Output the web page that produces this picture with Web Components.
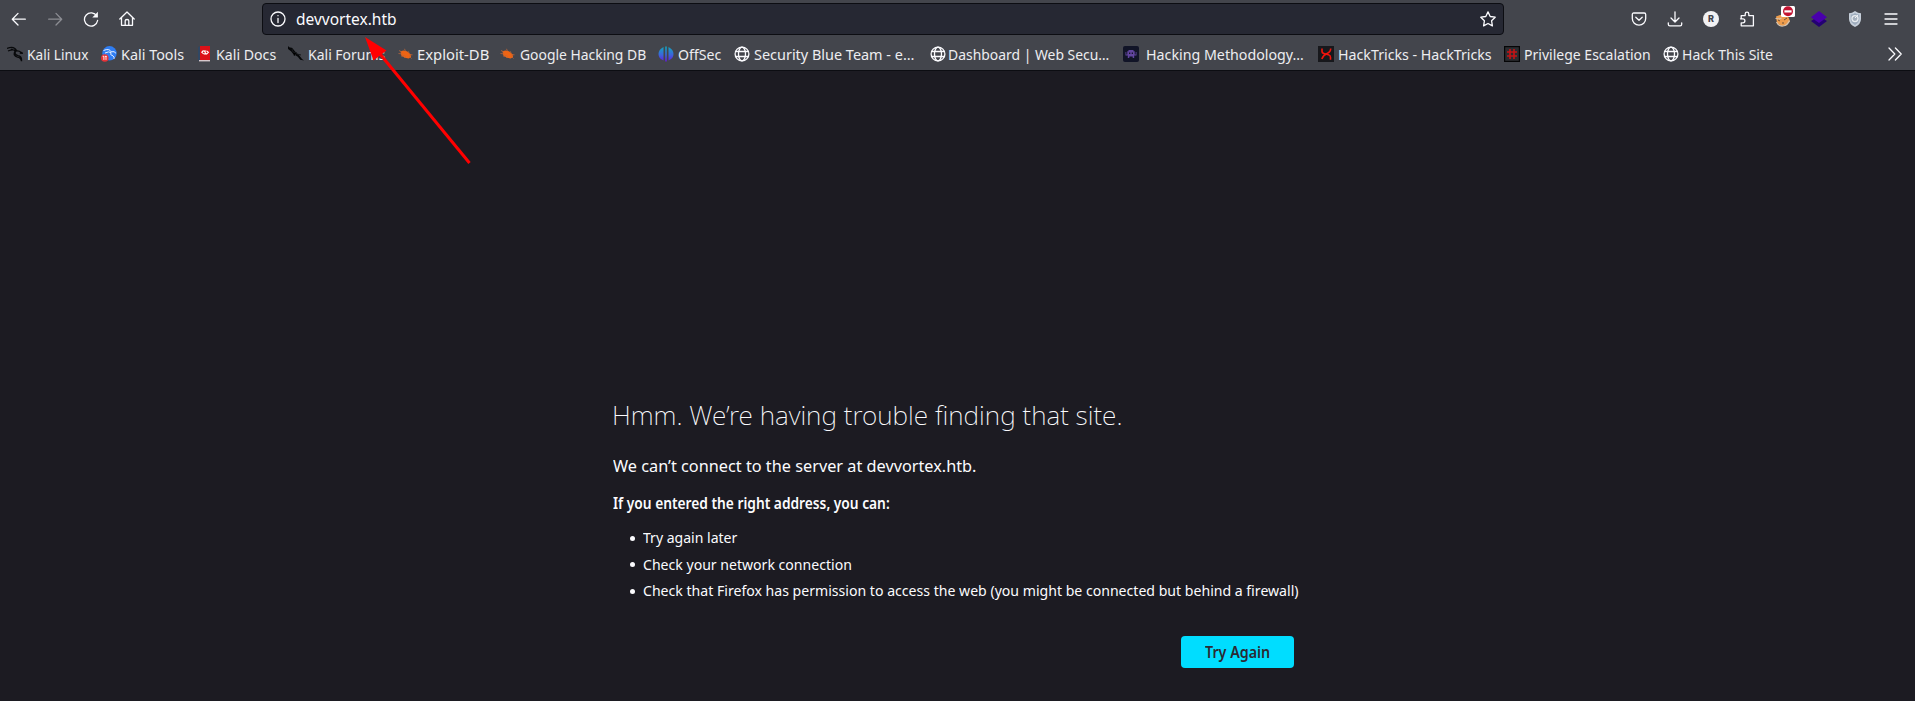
<!DOCTYPE html>
<html lang="en">
<head>
<meta charset="utf-8">
<title>Server Not Found</title>
<style>
html,body{margin:0;height:100%;overflow:hidden;background:#1c1b22}
body{font-family:"Noto Sans","Open Sans",sans-serif;color:#fbfbfe}
</style>
</head>
<body>
<browser-window></browser-window>
<script>
const pen = document.createElement('canvas').getContext('2d');

/* One line of text condensed to a given width. */
class FitText extends HTMLElement {
  connectedCallback() {
    const size = +(this.getAttribute('size') || 15), weight = this.getAttribute('weight') || 400;
    const width = +this.getAttribute('width');
    this.attachShadow({mode: 'open'}).innerHTML = `<style>
      :host{display:block;flex:none;width:${width}px;white-space:nowrap;font-size:${size}px;font-weight:${weight}}
      span{display:block;width:max-content;transform-origin:0 50%}</style><span><slot></slot></span>`;
    pen.font = `${weight} ${size}px "Noto Sans"`;
    const m = pen.measureText(this.textContent.trim());
    const left = m.actualBoundingBoxLeft, ink = left + m.actualBoundingBoxRight;
    this.shadowRoot.querySelector('span').style.transform = `scaleX(${width / ink}) translateX(${left}px)`;
  }
}
customElements.define('fit-text', FitText);

const line = (d, extra = '') => `<g fill="none" stroke="#fbfbfe" stroke-width="1.3" stroke-linecap="round" stroke-linejoin="round" ${extra}>${d}</g>`;
const bug = '<path fill="#ee6414" d="M2.5 5.2 5.5 4.4l3.5.8 3.5 3 .6 2.8-2.4 1.4-3.8-.6-3.7-2.4z"/><path d="m1 4.5 3 1.5M.5 7.5l4 .5m-1 2.5 3-1M6.5 2.8l1 2.5m3 0 .5 2m3.5 1.5h-3m2 3.700-2-2m-5 1.5 1-1.5" stroke="#b9643a" stroke-width=".8" fill="none"/>';
const icons = {
  back: line('<path d="M1.3 8.2h13M7 2.4 1.3 8.2 7 14"/>'),
  forward: line('<path d="M1.7 8.2h13M9 2.4l5.7 5.8L9 14"/>', 'opacity=".4"'),
  reload: line('<path d="M13.8 5.2A6.6 6.6 0 1 0 14.6 9.5"/>') + '<path d="M14.9.8v5.6H9.3z" fill="#fbfbfe"/>',
  home: line('<path d="M.8 8 8 1l7.2 7M2.5 6.7v7.6h11V6.7M6.2 14V9.7q0-1.2 1.8-1.2t1.8 1.2V14"/>'),
  info: line('<circle cx="8" cy="8" r="7"/><path d="M8 7.3v4.2M8 4.6v.1"/>'),
  star: line('<path d="m8 .9 2.2 4.6 5 .7-3.6 3.6.8 5.1L8 12.5l-4.4 2.4.8-5.1L.8 6.2l5-.7z"/>'),
  pocket: line('<path d="M2.8 2h10.4q1.5 0 1.5 1.5V7.5a6.7 6.7 0 0 1-13.4 0V3.5Q1.3 2 2.8 2zM4.8 6.3 8 9.3l3.2-3"/>'),
  download: line('<path d="M8 .8v10M4 7l4 4 4-4M1.3 11.8v1.4q0 1.6 1.6 1.6h10.2q1.6 0 1.6-1.6v-1.4"/>'),
  puzzle: line('<path d="M2.2 7.1V4.6h4V3a1.8 1.8 0 0 1 3.6 0v1.6h4.6v10.2H2.2v-3h1.7a2 2 0 0 0 0-4H1.5"/>'),
  menu: line('<path d="M2 3h12M2 8h12M2 13h12"/>'),
  more: line('<path d="m2 2 5.8 6L2 14M8.4 2l5.8 6-5.8 6"/>'),
  globe: line('<circle cx="8" cy="8" r="6.9"/><ellipse cx="8" cy="8" rx="3.5" ry="6.9"/><path d="M1.5 5.5h13M1.5 10.5h13"/>'),
  account: '<circle cx="8" cy="8" r="8" fill="#f1f1f3"/><text x="8" y="11.2" text-anchor="middle" font-size="9" font-weight="800" font-family="Inter,sans-serif" fill="#42444c">R</text>',
  fox: '<path d="M1 5.5 5 4l7-.5 2 4 1 3-4 4-5 .5-4-3z" fill="#ee9d4d"/><path d="m.5 7.500 4 .5 2-1M1.500 11q2 4.500 6.500 4t6.500-5.500" fill="none" stroke="#d5c5b2" stroke-width="1.2"/><path d="m3 9 2 1m4-1 3-2M7 12h2" stroke="#6e5038" fill="none"/>',
  layers: '<path d="m8 5 8 5-8 6-8-6z" fill="#240073"/><path d="m8 0 8 6.2L8 12 0 6.2z" fill="#4900ac"/>',
  shield: '<path d="M8 0q3 2.2 6 2.2V8q0 5.2-6 8-6-2.8-6-8V2.2Q5 2.2 8 0z" fill="#c6cfda"/><path d="M8 2q2 1.5 4.3 1.6V8q0 3.8-4.3 6-4.3-2.2-4.3-6V3.6Q6 3.5 8 2z" fill="#9eacbd"/><circle cx="8" cy="7.6" r="3" fill="#a5b0bd" stroke="#e7ebef" stroke-width="1.3"/><path d="m8 7 3-3" stroke="#eef1f4"/>',
  kali: '<path d="M0 2.5q7-3 9.5 2M1 5q5-2 8-.4M4 3l4.8 2q3-.8 5.4 1.4l1.6 1-3-.4M9 4.5q-2.5 4 2 5.2 4 .6 3.5 5.5-.8-3.6-4-4Q5.6 10 8 5" fill="none" stroke="#08090b" stroke-width="1.3"/>',
  tools: '<circle cx="8.5" cy="7.3" r="7.2" fill="#2f7df2"/><path d="M2.5 4.5q6-2.5 7.5 1.3 3.6-1 5 1.5M4 7q4-2 6-.4-1.5 2.4 2 3.3 1.6.8 1 3" fill="none" stroke="#e5eefe"/><circle cx="3.8" cy="12" r="3.8" fill="#e53338"/><path d="M1.7 10.3h1.2v3.6m1-3.5h1.9M5 10.5v3.4" fill="none" stroke="#fff" stroke-width=".9"/>',
  docs: '<path d="M1 1 3.5 0v14L1 14.8z" fill="#304763"/><path d="M3 0h10v14H3z" fill="#dc1118"/><path d="M2 14h11v1.4H2z" fill="#d6c8cc"/><path d="M6.500 4.500 4.800 6.300l1.800 1.500m3-3 1.800 1.500-1.800 1.900M6.200 5h3M6.800 7.900h3M7 4.500l2.500 4" stroke="#fff" stroke-width="1.1" fill="none"/>',
  forums: '<path d="M0 0q1 2 4 1.7l4.6 5.6 2 1.2L14 13l2 1.6-3.8-.9-2.4-3L5 7.7 3 5.2 0 3z" fill="#060709"/><path d="m4 3 1 3 4 1-3 3m3-2 4 1" stroke="#15171a"/>',
  bug,
  offsec: '<defs><linearGradient id="sea" x1="0" y1="0" x2="0" y2="1"><stop stop-color="#10a9bb"/><stop offset=".55" stop-color="#3b66db"/><stop offset="1" stop-color="#6419dd"/></linearGradient></defs><path fill="url(#sea)" d="M5.5 1v13.5Q.5 12.5.5 8T5.500 1zM7.2.4h1.6v15.2H7.2zM10.5 1v13.5q5-2 5-6.5t-5-7z"/>',
  invader: '<rect width="16" height="16" rx="2" fill="#111427"/><path d="M5.5 4h5v1.2h1.2V8.5h1V6h.8v3.5h-2.3V12H9.700v-1.5H6.3V12H4.8V9.5H2.500V6h.8v2.5h1V5.2h1.2z" fill="#6245a0"/><path d="M6 6.5h1.3V8H6zm2.7 0H10V8H8.7z" fill="#161527"/>',
  tricks: '<rect width="16" height="16" fill="#17181c"/><path d="M4 2.500v2.700q0 2 2.500 2.500l4 1q2 .5 2 2.500v2.500M12.700 2.500q0 3.500-3.700 5t-5.200 5.500" stroke="#f0140c" stroke-width="1.6" fill="none"/>',
  hash: '<path d="M0 0h16v16H0z" fill="#050506"/><path d="M1.2 1.2h13.6v13.6H1.2z" fill="#2b2c30"/><path d="M6 3v10m4-10v10M3 6h10M3 10h10" stroke="#c51316" stroke-width="1.6"/>'
};

class UiIcon extends HTMLElement {
  connectedCallback() {
    this.attachShadow({mode: 'open'}).innerHTML = `<style>:host{display:block;flex:none;width:16px;height:16px}svg{display:block}</style>
      <svg width="16" height="16" viewBox="0 0 16 16">${icons[this.getAttribute('name')]}</svg>`;
  }
}
customElements.define('ui-icon', UiIcon);

class AddonBadge extends HTMLElement {
  connectedCallback() {
    this.attachShadow({mode: 'open'}).innerHTML = `<style>:host{display:block;position:relative;width:16px;height:16px}
      svg{position:absolute;left:6px;top:-5px}</style><slot></slot>
      <svg width="14" height="11" viewBox="0 0 14 11"><rect width="14" height="11" rx="1.5" fill="#fff"/><circle cx="7" cy="5.3" r="5" fill="#c31432"/><path d="M3.4 4.3h7.2v2.2H3.4z" fill="#fff"/></svg>`;
  }
}
customElements.define('addon-badge', AddonBadge);

class AddressBar extends HTMLElement {
  connectedCallback() {
    this.attachShadow({mode: 'open'}).innerHTML = `<style>
      :host{display:flex;align-items:center;box-sizing:border-box;width:1242px;height:32px;margin-left:127px;padding:0 7px;background:#262833;border:1px solid #0c0d12;border-radius:4px}
      fit-text{margin:0 auto 0 10px;line-height:30px}</style>
      <ui-icon name="info"></ui-icon><fit-text size="15.5" width="93"><slot></slot></fit-text><ui-icon name="star"></ui-icon>`;
    const t = this.shadowRoot.querySelector('fit-text');
    t.textContent = this.textContent;
  }
}
customElements.define('address-bar', AddressBar);

class NavToolbar extends HTMLElement {
  connectedCallback() {
    this.attachShadow({mode: 'open'}).innerHTML = `<style>
      :host{display:flex;align-items:center;box-sizing:border-box;height:38px;padding-left:11px}
      .nav{display:flex;gap:20px}
      .addons{display:flex;gap:20px;margin:0 16px 0 auto}</style>
      <div class="nav"><ui-icon name="back"></ui-icon><ui-icon name="forward"></ui-icon><ui-icon name="reload"></ui-icon><ui-icon name="home"></ui-icon></div>
      <address-bar>devvortex.htb</address-bar>
      <div class="addons"><ui-icon name="pocket"></ui-icon><ui-icon name="download"></ui-icon><ui-icon name="account"></ui-icon><ui-icon name="puzzle"></ui-icon><addon-badge><ui-icon name="fox"></ui-icon></addon-badge><ui-icon name="layers"></ui-icon><ui-icon name="shield"></ui-icon><ui-icon name="menu"></ui-icon></div>`;
  }
}
customElements.define('nav-toolbar', NavToolbar);

/* name, icon, space before, space between icon and label, label width */
const bookmarks = [
  ['Kali Linux', 'kali', 7, 4.5, 60.5], ['Kali Tools', 'tools', 13, 4.5, 62], ['Kali Docs', 'docs', 13, 4.5, 59],
  ['Kali Forums', 'forums', 12, 5, 76], ['Exploit-DB', 'bug', 12.5, 4, 70.5], ['Google Hacking DB', 'bug', 12, 4, 125.5],
  ['OffSec', 'offsec', 12, 4.5, 43], ['Security Blue Team - e…', 'globe', 13, 3.5, 159.5], ['Dashboard | Web Secu…', 'globe', 16.5, 3.5, 159.5],
  ['Hacking Methodology…', 'invader', 14, 8, 156], ['HackTricks - HackTricks', 'tricks', 15, 5, 152.5], ['Privilege Escalation', 'hash', 13, 4.5, 125.5],
  ['Hack This Site', 'globe', 13, 4, 89.5]
];
class BookmarksBar extends HTMLElement {
  connectedCallback() {
    this.attachShadow({mode: 'open'}).innerHTML = `<style>
      :host{display:flex;align-items:center;box-sizing:border-box;height:33px;border-bottom:1px solid #0c0d12;color:#ededf0}
      div{display:flex;align-items:center;line-height:30px}
      .more{margin:0 12px 0 auto}</style>
      ${bookmarks.map(([t, i, m, g, w]) => `<div style="margin-left:${m}px;gap:${g}px"><ui-icon name="${i}"></ui-icon><fit-text width="${w}">${t}</fit-text></div>`).join('')}
      <ui-icon class="more" name="more"></ui-icon>`;
  }
}
customElements.define('bookmarks-bar', BookmarksBar);

class ErrorPage extends HTMLElement {
  connectedCallback() {
    this.attachShadow({mode: 'open'}).innerHTML = `<style>
      :host{display:flex;flex-direction:column;width:681px;padding:324px 0 0 613px}
      h1,p,ul{margin:0;padding:0;font:inherit}
      h1{line-height:40px;padding-left:1px}
      .lead{line-height:30px;margin-top:16px}
      .hint{line-height:24px;margin-top:10px}
      ul{list-style:none;margin-top:9px}
      li{display:flex;align-items:center;height:26.5px;line-height:26px;padding-left:16.5px;gap:8px}
      li::before{content:"";flex:none;width:5px;height:5px;border-radius:50%;background:#fbfbfe;margin-top:2px}
      button{display:flex;align-items:center;justify-content:center;align-self:flex-end;width:113px;height:32px;margin:32.5px 0 0;padding:0;border:0;border-radius:4px;background:#00ddff;color:#2b2a33;font-family:inherit;line-height:30px}
      button fit-text{margin-top:-1px}</style>
      <h1><fit-text size="26" weight="200" width="506.5">Hmm. We’re having trouble finding that site.</fit-text></h1>
      <p class="lead"><fit-text size="16.8" width="363">We can’t connect to the server at devvortex.htb.</fit-text></p>
      <p class="hint"><fit-text size="15.2" weight="600" width="276.5">If you entered the right address, you can:</fit-text></p>
      <ul><li><fit-text size="15.2" width="95">Try again later</fit-text></li>
      <li><fit-text size="15.2" width="208.5">Check your network connection</fit-text></li>
      <li><fit-text size="15.2" width="655">Check that Firefox has permission to access the web (you might be connected but behind a firewall)</fit-text></li></ul>
      <button><fit-text size="15.2" weight="600" width="64.5">Try Again</fit-text></button>`;
  }
}
customElements.define('error-page', ErrorPage);

class PointerArrow extends HTMLElement {
  connectedCallback() {
    this.attachShadow({mode: 'open'}).innerHTML = `<style>:host{display:block;position:absolute;left:360px;top:34px;pointer-events:none}svg{display:block}</style>
      <svg width="115" height="135" viewBox="0 0 115 135"><path d="M20 20 109.500 129" stroke="#f00" stroke-width="3"/><path d="M5 3 26.500 16.500 13.500 26.500z" fill="#f00"/></svg>`;
  }
}
customElements.define('pointer-arrow', PointerArrow);

class BrowserWindow extends HTMLElement {
  connectedCallback() {
    this.attachShadow({mode: 'open'}).innerHTML = `<style>
      :host{display:block;position:relative;height:701px;overflow:hidden;background:#1c1b22}
      header{height:71px;background:#43454c}</style>
      <header><nav-toolbar></nav-toolbar><bookmarks-bar></bookmarks-bar></header>
      <error-page></error-page><pointer-arrow></pointer-arrow>`;
  }
}
customElements.define('browser-window', BrowserWindow);
</script>
</body>
</html>
